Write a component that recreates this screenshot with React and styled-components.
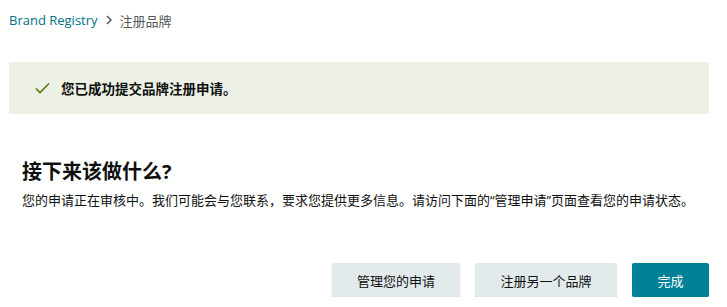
import styled, { createGlobalStyle } from 'styled-components'

const GlobalStyle = createGlobalStyle`
  body {
    margin: 0;
    background: #fff;
    font-family: "Open Sans", "Noto Sans CJK SC", sans-serif;
    color: #0f1111;
  }
`

const Page = styled.div`
  width: 700px;
  padding: 9px 0 0 9px;
`

const Breadcrumb = styled.div`
  display: flex;
  align-items: center;
  gap: 7px;
  height: 22px;
  font-size: 13px;
`

const CrumbLink = styled.span`
  color: #007185;
`

const CrumbCurrent = styled.span`
  color: #565959;
`

const Banner = styled.div`
  margin-top: 31px;
  height: 52px;
  background: #edf0e4;
  display: flex;
  align-items: center;
  padding-left: 26px;
  gap: 11px;
  font-size: 13.5px;
  font-weight: 700;
  color: #0f1111;
`

const Section = styled.div`
  padding: 45px 0 0 13px;
`

const Heading = styled.h2`
  margin: 0;
  font-size: 20px;
  font-weight: 700;
  line-height: 26px;
  color: #0f1111;
`

const Text = styled.p`
  margin: 6px 0 0;
  font-size: 13px;
  line-height: 18px;
  color: #0f1111;
`

const Actions = styled.div`
  display: flex;
  justify-content: flex-end;
  gap: 15px;
  margin-top: 54px;
`

const Button = styled.button`
  height: 34px;
  width: ${p => p.$w}px;
  border: none;
  border-radius: 2px;
  font-family: inherit;
  font-size: 13px;
  cursor: pointer;
  background: ${p => (p.$primary ? '#008296' : '#e3eaeb')};
  color: ${p => (p.$primary ? '#fff' : '#0f1111')};
  box-shadow: 0 1px 1px rgba(0, 0, 0, 0.25);
`

const Check = () => (
  <svg width="15" height="12" viewBox="0 0 15 12">
    <path d="M1 6.5 L5 10.5 L14 1.5" fill="none" stroke="#56780f" strokeWidth="1.6" />
  </svg>
)

const Chevron = () => (
  <svg width="8" height="10" viewBox="0 0 8 10">
    <path d="M2 1 L6 5 L2 9" fill="none" stroke="#565959" strokeWidth="1.5" />
  </svg>
)

export default function App() {
  return (
    <>
      <GlobalStyle />
      <Page>
        <Breadcrumb>
          <CrumbLink>Brand Registry</CrumbLink>
          <Chevron />
          <CrumbCurrent>注册品牌</CrumbCurrent>
        </Breadcrumb>
        <Banner>
          <Check />
          您已成功提交品牌注册申请。
        </Banner>
        <Section>
          <Heading>接下来该做什么?</Heading>
          <Text>您的申请正在审核中。我们可能会与您联系，要求您提供更多信息。请访问下面的“管理申请”页面查看您的申请状态。</Text>
        </Section>
        <Actions>
          <Button $w={128}>管理您的申请</Button>
          <Button $w={142}>注册另一个品牌</Button>
          <Button $w={77} $primary>完成</Button>
        </Actions>
      </Page>
    </>
  )
}
